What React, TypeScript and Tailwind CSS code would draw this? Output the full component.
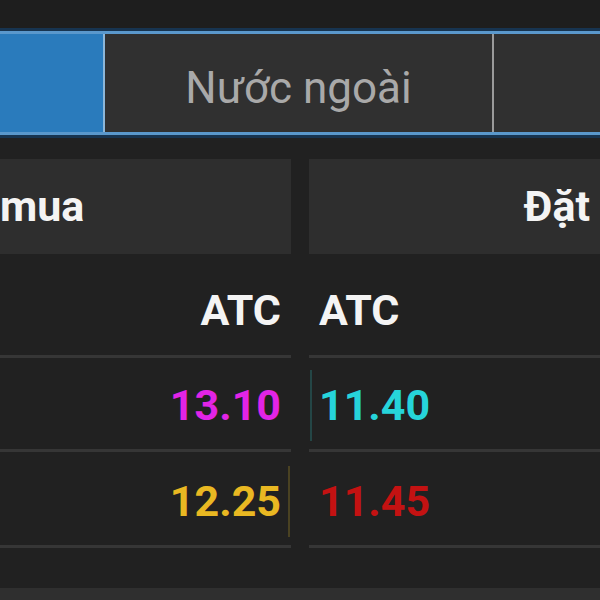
import React from 'react'

type Cell = { text: string; color: string; bar?: string }

type Row = {
  height: string
  pad: string
  left: Cell
  right: Cell
}

const rows: Row[] = [
  {
    height: 'h-[101px]',
    pad: 'pt-[12px]',
    left: { text: 'ATC', color: 'text-[#f4f4f4]' },
    right: { text: 'ATC', color: 'text-[#f4f4f4]' },
  },
  {
    height: 'h-[91px]',
    pad: 'pt-[4px]',
    left: { text: '13.10', color: 'text-[#e224e6]' },
    right: { text: '11.40', color: 'text-[#26d4da]', bar: 'bg-[#244646]' },
  },
  {
    height: 'h-[93px]',
    pad: 'pt-[6px]',
    left: { text: '12.25', color: 'text-[#e9b822]', bar: 'bg-[#4a4222]' },
    right: { text: '11.45', color: 'text-[#c41212]' },
  },
]

function Separator() {
  return (
    <div className="grid grid-cols-[291px_291px] gap-x-[18px]">
      <div className="h-[3px] bg-[#363636]" />
      <div className="h-[3px] bg-[#363636]" />
    </div>
  )
}

export default function App() {
  return (
    <div className="flex h-[600px] w-[600px] flex-col overflow-hidden bg-[#212121] font-['Roboto',sans-serif]">
      <div className="h-[28px] bg-[#1e1e1e]" />

      {/* Tabs */}
      <div className="bg-[#173450] py-[3px]">
        <div className="flex h-[104px] border-y-[3px] border-[#5a98cc]">
          <div className="w-[105px] border-r-2 border-[#8cb6d8] bg-[#2a7bbc]" />
          <div className="flex w-[389px] items-center justify-center border-r-2 border-[#9a9a9a] bg-[#303030] pt-[9px]">
            <span className="text-[44px] leading-none text-[#a9a9a9]">Nước ngoài</span>
          </div>
          <div className="flex-1 bg-[#303030]" />
        </div>
      </div>

      <div className="h-[21px]" />

      {/* Header */}
      <div className="grid grid-cols-[291px_291px] gap-x-[18px]">
        <div className="flex h-[95px] items-center bg-[#2e2e2e]">
          <span className="text-[43px] font-bold leading-none text-[#f4f4f4]">mua</span>
        </div>
        <div className="flex h-[95px] items-center justify-end bg-[#2e2e2e] pr-[10px]">
          <span className="text-[43px] font-bold leading-none text-[#f4f4f4]">Đặt</span>
        </div>
      </div>

      {rows.map((row, i) => (
        <div key={i}>
          <div className={`grid grid-cols-[291px_291px] gap-x-[18px] ${row.height}`}>
            <div className={`flex items-center justify-end ${row.pad}`}>
              <span className={`text-[43px] font-bold leading-none ${row.left.color}`}>{row.left.text}</span>
              <div className="w-[10px] self-stretch py-[8px] pl-[7px]">
                {row.left.bar && <div className={`h-full w-[2px] ${row.left.bar}`} />}
              </div>
            </div>
            <div className={`flex items-center ${row.pad}`}>
              <div className="w-[10px] self-stretch py-[8px] pl-[1px]">
                {row.right.bar && <div className={`h-full w-[2px] ${row.right.bar}`} />}
              </div>
              <span className={`text-[43px] font-bold leading-none ${row.right.color}`}>{row.right.text}</span>
            </div>
          </div>
          <Separator />
        </div>
      ))}

      <div className="flex-1" />
      <div className="h-[12px] bg-[#2f2f2f]" />
    </div>
  )
}
